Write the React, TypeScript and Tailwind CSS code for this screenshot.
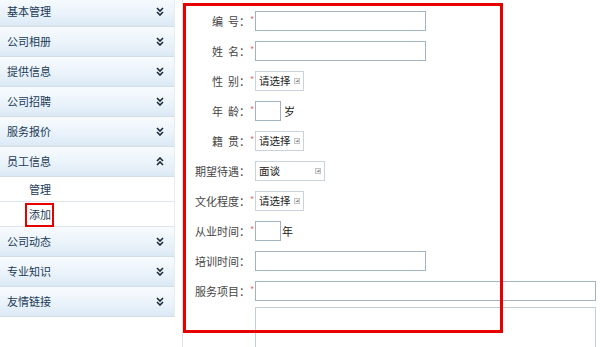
import React from 'react';

type MenuItem = { label: string; open?: boolean; children?: string[] };

const menu: MenuItem[] = [
  { label: '基本管理' },
  { label: '公司相册' },
  { label: '提供信息' },
  { label: '公司招聘' },
  { label: '服务报价' },
  { label: '员工信息', open: true, children: ['管理', '添加'] },
  { label: '公司动态' },
  { label: '专业知识' },
  { label: '友情链接' },
];

const Chevrons: React.FC<{ up?: boolean }> = ({ up }) => (
  <svg width="8" height="9" viewBox="0 0 8 9" className={up ? 'rotate-180' : ''}>
    <path d="M1 1 L4 4 L7 1 M1 5 L4 8 L7 5" fill="none" stroke="#1b2a3a" strokeWidth="1.6" />
  </svg>
);

const Select: React.FC<{ value: string; width: string }> = ({ value, width }) => (
  <div className={`${width} h-[20px] border border-[#c9d3dd] bg-white flex items-center justify-between pl-[3px] pr-[3px] text-[10.5px] text-[#222] whitespace-nowrap`}>
    <span>{value}</span>
    <svg width="6" height="6" viewBox="0 0 6 6" className="shrink-0">
      <rect x="0.5" y="0.5" width="5" height="5" fill="#f2f2f2" stroke="#c4c4c4" />
      <path d="M1.5 4 L4.5 4 L4.5 1.5 Z" fill="#888" />
    </svg>
  </div>
);

const Row: React.FC<{ label: string; req?: boolean; children: React.ReactNode }> = ({ label, req, children }) => {
  const parts = label.split(' ');
  return (
    <div className="h-[30px] flex items-center">
      <div className="w-[66px] flex justify-end text-[11px] text-[#444] whitespace-nowrap">
        {parts.length > 1 ? (
          <>
            <span>{parts[0]}</span>
            <span className="ml-[5px]">{parts[1]}</span>
          </>
        ) : (
          <span>{label}</span>
        )}
      </div>
      <div className="w-[5px] text-[9px] text-[#e07070] leading-none -mt-[4px]">{req ? '*' : ''}</div>
      {children}
    </div>
  );
};

const inputCls = 'h-[20px] border border-[#a3b3c2] bg-white';

export default function App() {
  return (
    <div className="relative w-[600px] h-[347px] overflow-hidden bg-white flex" style={{ fontFamily: '"Noto Sans CJK SC", "Noto Sans", sans-serif' }}>
      <aside className="w-[175px] shrink-0 border-r border-[#e4ebf1] -mt-[3px] self-start">
        {menu.map((m) => (
          <div key={m.label}>
            <div className="h-[30px] flex items-center justify-between pl-[7px] pr-[10px] border-b border-[#d3dde6] bg-[linear-gradient(180deg,#f8fbfe_0%,#e9f2fa_60%,#dbe9f5_100%)]">
              <span className="text-[11px] text-[#1a3a58]">{m.label}</span>
              <Chevrons up={m.open} />
            </div>
            {m.open &&
              m.children?.map((c) => (
                <div key={c} className="h-[25px] flex items-center pl-[29px] border-b border-[#dfe6ec] bg-white">
                  <span className="text-[11px] text-[#1a3a58]">{c}</span>
                </div>
              ))}
          </div>
        ))}
      </aside>

      <main className="flex-1 pt-[6px] pl-[1px] border-l border-[#dfe4e8] ml-[7px]">
        <Row label="编 号：" req>
          <div className={`${inputCls} w-[171px]`} />
        </Row>
        <Row label="姓 名：" req>
          <div className={`${inputCls} w-[171px]`} />
        </Row>
        <Row label="性 别：" req>
          <Select value="请选择" width="w-[49px]" />
        </Row>
        <Row label="年 龄：" req>
          <div className={`${inputCls} w-[26px]`} />
          <span className="ml-[3px] text-[11px] text-[#222]">岁</span>
        </Row>
        <Row label="籍 贯：" req>
          <Select value="请选择" width="w-[49px]" />
        </Row>
        <Row label="期望待遇：">
          <Select value="面谈" width="w-[70px]" />
        </Row>
        <Row label="文化程度：" req>
          <Select value="请选择" width="w-[49px]" />
        </Row>
        <Row label="从业时间：" req>
          <div className={`${inputCls} w-[26px]`} />
          <span className="ml-[1px] text-[11px] text-[#222]">年</span>
        </Row>
        <Row label="培训时间：">
          <div className={`${inputCls} w-[171px]`} />
        </Row>
        <Row label="服务项目：" req>
          <div className={`${inputCls} w-[341px]`} />
        </Row>
        <div className="flex">
          <div className="w-[71px]" />
          <div className="w-[341px] h-[60px] border border-[#c3ced8] mt-[1px]" />
        </div>
      </main>

      <div className="absolute left-[183px] top-[3px] w-[320px] h-[330px] border-[3px] border-[#e60000] pointer-events-none" />
      <div className="absolute left-[25px] top-[203px] w-[29px] h-[24px] border-2 border-[#e60000] pointer-events-none" />
    </div>
  );
}
